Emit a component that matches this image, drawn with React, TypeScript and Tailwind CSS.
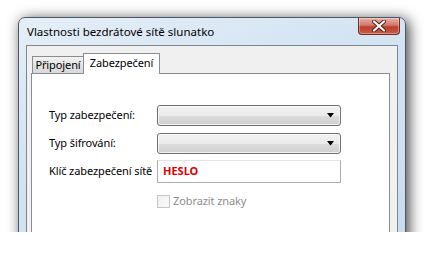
import { useState } from "react";

const font = { fontFamily: '"Noto Sans", "Open Sans", sans-serif' };

const CloseButton = () => (
  <div className="absolute right-[5px] top-0 flex h-[17px] w-[42px] items-center justify-center rounded-b-[4px] border border-t-0 border-[#6d2a22] bg-[linear-gradient(#e8b2a7,#d1786a_45%,#bc3f2e_55%,#c95a45)] shadow-[inset_0_0_0_1px_rgba(255,255,255,0.35)]">
    <svg width="14" height="12" viewBox="0 0 14 12">
      <path
        d="M2 1.5 L12 10.5 M12 1.5 L2 10.5"
        stroke="#5a1a12"
        strokeWidth="4"
        strokeLinecap="round"
      />
      <path
        d="M2 1.5 L12 10.5 M12 1.5 L2 10.5"
        stroke="#ffffff"
        strokeWidth="2.2"
        strokeLinecap="round"
      />
    </svg>
  </div>
);

const Dropdown = () => (
  <div className="flex h-[21px] w-[184px] items-center justify-end rounded-[3px] border border-[#707070] bg-[linear-gradient(#f2f2f2,#ebebeb_50%,#dddddd_50%,#cfcfcf)] pr-[5px] shadow-[inset_0_0_0_1px_rgba(255,255,255,0.7)]">
    <svg width="8" height="5" viewBox="0 0 8 5">
      <path d="M0 0 H7 L3.5 4.5 Z" fill="#000" />
    </svg>
  </div>
);

const App = () => {
  const [showChars, setShowChars] = useState(false);

  return (
    <div className="h-[257px] w-[426px] bg-white" style={font}>
      <div className="h-[232px] overflow-hidden pl-[18px] pr-[20px] pt-[17px]">
        <div className="relative h-[260px] w-[388px] rounded-t-[7px] border border-[#4a5a6a] bg-[linear-gradient(160deg,#e4eef7,#d3e3f2_40%,#c7dbef)] px-[7px] pb-[7px] shadow-[3px_2px_14px_rgba(0,0,0,0.75)]">
          <div className="flex h-[27px] items-center pl-[1px] text-[11.5px] text-black">
            Vlastnosti bezdrátové sítě slunatko
          </div>
          <CloseButton />

          <div className="h-[220px] border border-[#7c8794] bg-[#f0f0f0] pl-[4px] pr-[7px] pt-[6px]">
            <div className="flex h-[21px] items-end whitespace-nowrap text-[11px] tracking-[-0.1px] text-black">
              <div className="ml-[1px] flex h-[17px] w-[52px] items-center justify-center border border-b-0 border-[#898c95] bg-[linear-gradient(#f2f2f2,#e3e3e3_50%,#d9d9d9)]">
                Připojení
              </div>
              <div className="relative z-10 -mb-[1px] -ml-[1px] flex h-[21px] w-[77px] items-center justify-center border border-b-0 border-[#898c95] bg-white pb-[2px]">
                Zabezpečení
              </div>
            </div>
            <div className="h-[200px] whitespace-nowrap border border-[#898c95] bg-white pl-[17px] pt-[31px] text-[11px] tracking-[-0.1px] text-black">
              <div className="flex h-[21px] items-center">
                <div className="w-[108px]">Typ zabezpečení:</div>
                <Dropdown />
              </div>
              <div className="mt-[7px] flex h-[21px] items-center">
                <div className="w-[108px]">Typ šifrování:</div>
                <Dropdown />
              </div>
              <div className="mt-[6px] flex h-[23px] items-center">
                <div className="w-[108px]">Klíč zabezpečení sítě</div>
                <div className="flex h-[23px] w-[184px] items-center border border-[#abadb3] border-t-[#e3e3e3] bg-white pl-[5px] text-[11px] font-bold tracking-normal text-[#e00000]">
                  HESLO
                </div>
              </div>
              <div className="mt-[10px] flex items-center pl-[108px]">
                <button
                  type="button"
                  onClick={() => setShowChars(!showChars)}
                  className="h-[13px] w-[13px] border border-[#c5c5c5] bg-[linear-gradient(135deg,#f1f1f1,#fafafa)]"
                />
                <span className="ml-[3px] text-[#8d8d8d]">Zobrazit znaky</span>
              </div>
            </div>
          </div>
        </div>
      </div>
    </div>
  );
};

export default App;
